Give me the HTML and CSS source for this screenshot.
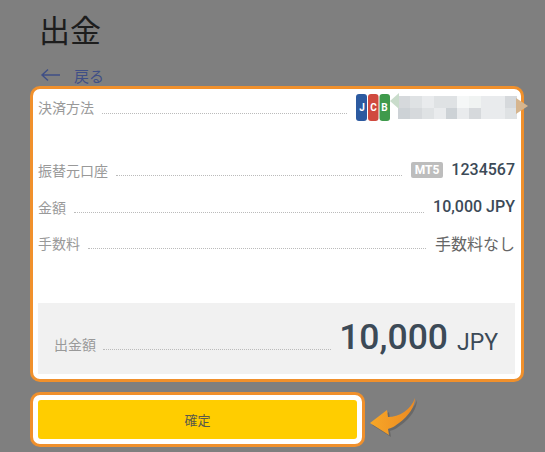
FILE: index.html
```html
<!DOCTYPE html>
<html lang="ja">
<head>
<meta charset="utf-8">
<title>出金</title>
<link rel="stylesheet" href="styles.css">
</head>
<body>
<main class="page">
  <h1 class="title">出金</h1>
  <a class="back"><svg class="back-icon" width="21" height="14" viewBox="0 0 21 14"><path d="M20 7H2M8 1.500 2 7l6 5.500" fill="none" stroke="#3f4f86" stroke-width="1.400"/></svg><span>戻る</span></a>
  <section class="card">
    <div class="row row-method">
      <span class="label">決済方法</span><span class="dots"></span>
      <svg class="jcb" width="34" height="27" viewBox="0 0 34 27">
        <rect x="0" y="0" width="11" height="27" rx="3" fill="#2c5aa0"/>
        <rect x="12" y="0" width="10.500" height="27" rx="3" fill="#d04a3f"/>
        <rect x="23.500" y="0" width="10.500" height="27" rx="3" fill="#3f9a4c"/>
        <text x="6" y="17" class="jcb-text">J</text>
        <text x="17.500" y="17" class="jcb-text">C</text>
        <text x="28.500" y="17" class="jcb-text">B</text>
      </svg>
      <div class="mosaic-wrap">
        <span class="mosaic-notch"></span>
        <div class="mosaic">
          <i class="m2"></i><i class="m3"></i><i class="m4"></i><i class="m3"></i><i class="m3"></i><i class="m6"></i><i class="m5"></i><i class="m4"></i><i class="m4"></i><i class="m2"></i>
          <i class="m1"></i><i class="m2"></i><i class="m3"></i><i class="m4"></i><i class="m1"></i><i class="m4"></i><i class="m2"></i><i class="m4"></i><i class="m4"></i><i class="m3"></i>
        </div>
        <span class="mosaic-tip"></span>
      </div>
    </div>
    <div class="row row-account">
      <span class="label">振替元口座</span><span class="dots"></span>
      <span class="badge">MT5</span><span class="value">1234567</span>
    </div>
    <div class="row row-amount">
      <span class="label">金額</span><span class="dots"></span>
      <span class="value">10,000 JPY</span>
    </div>
    <div class="row row-fee">
      <span class="label">手数料</span><span class="dots"></span>
      <span class="value-fee">手数料なし</span>
    </div>
    <div class="total">
      <span class="label">出金額</span><span class="dots"></span>
      <span class="total-num">10,000</span><span class="total-cur">JPY</span>
    </div>
  </section>
  <div class="actions">
    <div class="confirm-frame"><button class="confirm" type="button">確定</button></div>
    <svg class="pointer" width="48" height="42" viewBox="0 0 48 42">
      <defs><linearGradient id="ag" x1="0" x2="1" y1="0" y2="0"><stop offset="0" stop-color="#f7a727"/><stop offset="1" stop-color="#ec8a22"/></linearGradient></defs>
      <path d="M46 2C46 10 40 20 30 27 25 31 22 32 19 33L20 39 1 27 18 14 19 21C30 21 42 14 46 2Z" fill="#4d4d4d" opacity=".45" transform="translate(2 2)"/>
      <path d="M46 2C46 10 40 20 30 27 25 31 22 32 19 33L20 39 1 27 18 14 19 21C30 21 42 14 46 2Z" fill="url(#ag)"/>
    </svg>
  </div>
</main>
</body>
</html>
```
FILE: styles.css
```css
* { box-sizing: border-box; }
html, body { margin: 0; height: 100%; }
body {
  width: 545px;
  height: 452px;
  overflow: hidden;
  background: #7f7f7f;
  font-family: Roboto, "Noto Sans CJK JP", sans-serif;
  color: #3c4a57;
}
.page { padding: 13px 0 0 30px; width: 545px; }
.title {
  margin: 0 0 0 9px;
  font-size: 31px;
  line-height: 38px;
  font-weight: 400;
  color: #1d1d1d;
}
.back {
  display: flex;
  align-items: center;
  gap: 13px;
  margin: 14px 0 0 10px;
  height: 20px;
  font-size: 15px;
  color: #3f4f86;
}
.card {
  margin-top: 1px;
  width: 494px;
  height: 296px;
  border: 3px solid #f0902c;
  border-radius: 10px;
  background: #fff;
  padding: 5px 6px 5px 5px;
  display: flex;
  flex-direction: column;
}
.row { display: flex; align-items: center; height: 27px; }
.row-account { margin-top: 35px; }
.row-amount { margin-top: 10px; }
.row-fee { margin-top: 9px; }
.row-method .label { margin-bottom: 2px; }
.label { font-size: 14px; color: #999; white-space: nowrap; }
.dots {
  flex: 1;
  align-self: flex-end;
  margin: 0 9px 7px 8px;
  border-bottom: 1px dotted #bbb;
}
.jcb { flex: none; }
.jcb-text { font: 700 10px Roboto, sans-serif; fill: #fff; text-anchor: middle; }
.mosaic-wrap { position: relative; margin: 0 -2px 0 8px; width: 119px; height: 23px; }
.mosaic { display: grid; grid-template-columns: repeat(10, 1fr); grid-template-rows: 1fr 1fr; height: 100%; }
.mosaic i { display: block; }
.m1 { background: #cdd2d6; }
.m2 { background: #d6d9dc; }
.m3 { background: #dfe2e4; }
.m4 { background: #e9ebed; }
.m5 { background: #f0f3f2; }
.m6 { background: #f5f7f7; }
.mosaic-notch {
  position: absolute;
  left: -8px;
  top: -3px;
  border-right: 9px solid #c9dccb;
  border-top: 8px solid transparent;
  border-bottom: 8px solid transparent;
}
.mosaic-tip {
  position: absolute;
  left: 118px;
  top: 2px;
  border-left: 12px solid #d6b58e;
  border-top: 8px solid transparent;
  border-bottom: 8px solid transparent;
}
.badge {
  background: #bdbdbd;
  color: #fff;
  font-size: 12px;
  font-weight: 700;
  line-height: 16px;
  padding: 0 4px;
  border-radius: 2px;
  margin-right: 8px;
}
.value { font-size: 16px; font-weight: 500; color: #3c4a57; }
.value-fee { font-size: 16px; color: #666; }
.total {
  margin-top: auto;
  height: 71px;
  background: #f1f1f1;
  display: flex;
  align-items: flex-end;
  padding: 0 17px 16px 16px;
}
.total .label { margin-bottom: 4px; }
.total .dots { margin: 0 8px 8px 7px; }
.total-num { font-size: 35.500px; line-height: 42px; font-weight: 500; color: #3c4a57; }
.total-cur { font-size: 23px; line-height: 30px; margin-left: 9px; color: #3c4a57; }
.actions { display: flex; align-items: center; margin-top: 10px; }
.confirm-frame {
  width: 335px;
  height: 55px;
  border: 3px solid #f0902c;
  border-radius: 10px;
  background: #fff;
  padding: 5px;
}
.confirm {
  display: block;
  width: 100%;
  height: 100%;
  border: 0;
  border-radius: 3px;
  background: #ffcd00;
  color: #5a5a4a;
  font: 400 13px Roboto, "Noto Sans CJK JP", sans-serif;
}
.pointer { margin-left: 4px; margin-top: -5px; }
```
